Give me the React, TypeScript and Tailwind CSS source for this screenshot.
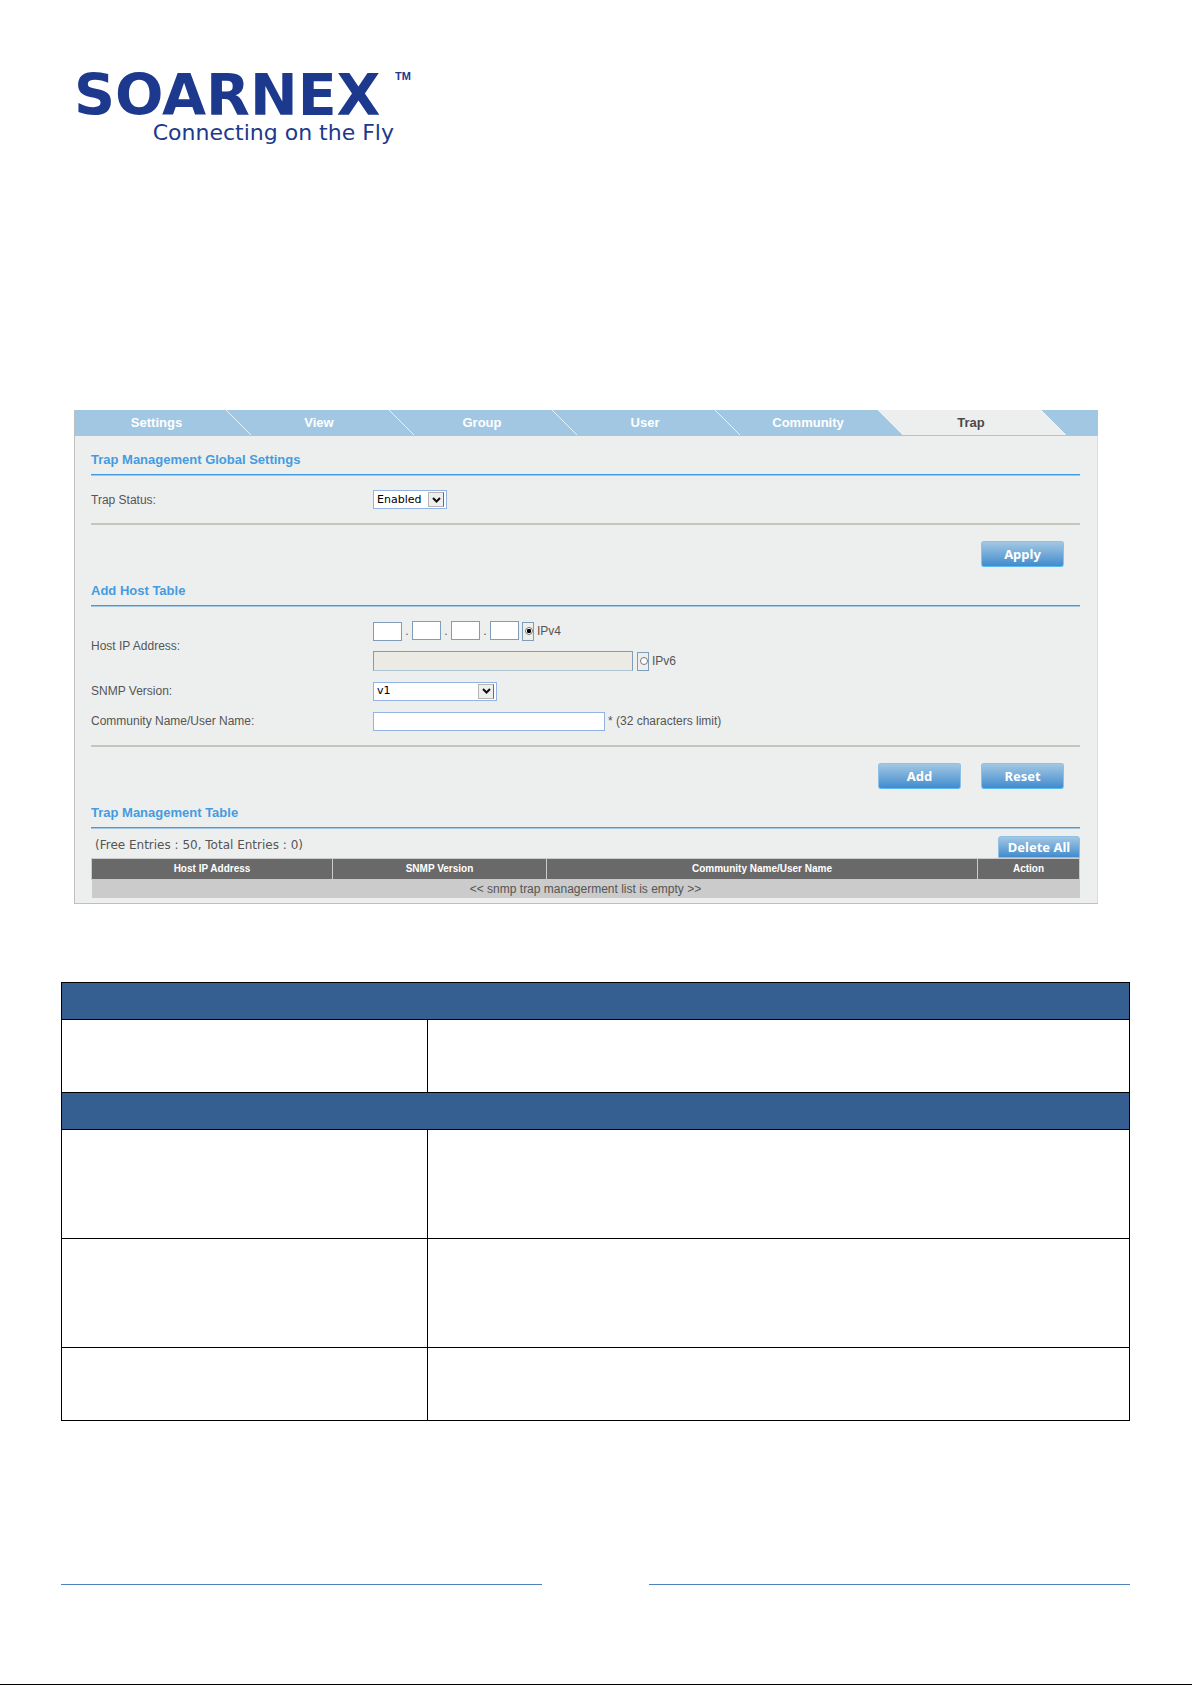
import type { ReactNode } from "react";

const tabs = ["Settings", "View", "Group", "User", "Community", "Trap"];
const octets = ["first", "second", "third", "fourth"];

const columns = [
  { label: "Host IP Address", width: "w-[241px]" },
  { label: "SNMP Version", width: "w-[214px]" },
  { label: "Community Name/User Name", width: "w-auto" },
  { label: "Action", width: "w-[102px]" },
];

function Logo() {
  return (
    <svg
      width="350"
      height="106"
      viewBox="0 0 350 106"
      fill="#1c398e"
      fontFamily="'DejaVu Sans', sans-serif"
      role="img"
      aria-label="SOARNEX Connecting on the Fly"
    >
      <text x="0" y="68" fontSize="57" fontWeight="700">
        SOARNEX
      </text>
      <text
        x="337"
        y="33"
        fontSize="11"
        fontWeight="700"
        fontFamily="'Liberation Sans', sans-serif"
        textAnchor="end"
      >
        TM
      </text>
      <text x="320" y="93" fontSize="22" textAnchor="end">
        Connecting on the Fly
      </text>
    </svg>
  );
}

function Slant({ left, right }: { left: string; right: string }) {
  return (
    <svg width="25" height="25" viewBox="0 0 25 25" className="shrink-0">
      <path d="M0 0H25V25H0Z" fill={right} />
      <path d="M0 0L25 25H0Z" fill={left} />
      <path d="M0 0L25 25" stroke="#e8f1f7" strokeWidth="1" />
    </svg>
  );
}

function TabBar() {
  return (
    <nav className="flex h-[25px] bg-[#a2c7e3]">
      {tabs.map((tab, i) => {
        const active = tab === "Trap";
        const nextActive = tabs[i + 1] === "Trap";
        return (
          <div
            key={tab}
            className={`flex basis-0 ${i === 0 ? "grow-[176]" : "grow-[163]"}`}
          >
            <a
              href="#"
              className={`flex-1 text-center text-[13px] leading-[25px] font-bold ${
                i === 0 ? "pl-3" : "pr-0.5"
              } ${active ? "bg-[#edefee] text-[#4a4a4a]" : "text-white"}`}
            >
              {tab}
            </a>
            <Slant
              left={active ? "#edefee" : "#a2c7e3"}
              right={nextActive ? "#edefee" : "#a2c7e3"}
            />
          </div>
        );
      })}
      <div className="grow-[32] basis-0"></div>
    </nav>
  );
}

function Heading({ children }: { children: ReactNode }) {
  return (
    <div className="border-b border-[#a2c7e3]">
      <h2 className="border-b border-[#459bdf] pb-0.5 text-[13px] leading-6 font-bold text-[#459bdf]">
        {children}
      </h2>
    </div>
  );
}

function Button({ children }: { children: ReactNode }) {
  return (
    <button className="h-[26px] w-[83px] rounded-[3px] border border-[#8fc0e6] border-b-[#5cb8f0] bg-linear-to-b from-[#a2c7e3] to-[#3f8ccd] font-['Noto_Sans',sans-serif] text-[13px] leading-5 font-bold text-white">
      {children}
    </button>
  );
}

function Select({ id, value, width }: { id: string; value: string; width: string }) {
  return (
    <div className={`relative h-[19px] ${width}`}>
      <select
        id={id}
        className="block h-full w-full appearance-none border border-[#92b3e3] bg-white pl-[3px] font-['DejaVu_Sans',sans-serif] text-[11px] leading-4 text-black"
      >
        <option>{value}</option>
      </select>
      <span className="pointer-events-none absolute top-[2px] right-[3px] flex h-[15px] w-4 items-center justify-center border border-[#b5b5b5] border-r-[#6b6b6b] bg-[#efefef]">
        <svg width="9" height="6" viewBox="0 0 9 6" fill="none">
          <path d="M1 1L4.5 4.5L8 1" stroke="#111" strokeWidth="2" />
        </svg>
      </span>
    </div>
  );
}

function Version({ label, checked }: { label: string; checked?: boolean }) {
  return (
    <label className="flex items-center gap-[3px]">
      <span className="flex h-[19px] w-3 items-center justify-end border border-[#7f9db9]">
        <input
          type="radio"
          name="ip-version"
          defaultChecked={checked}
          className="h-2 w-2 appearance-none rounded-full border border-[#777] bg-white checked:bg-[radial-gradient(#000_45%,#fff_60%)]"
        />
      </span>
      {label}
    </label>
  );
}

function TrapPanel() {
  return (
    <section className="mr-8 ml-[13px] border-b border-l border-[#bfbfbf] font-['Liberation_Sans',Arial,sans-serif] text-xs leading-5 text-[#555]">
      <TabBar />
      <div className="border-t border-r border-t-[#bfbfbf] border-r-[#dcdcdc] bg-[#edefee] pt-3 pr-[17px] pb-[5px] pl-4">
        <Heading>Trap Management Global Settings</Heading>
        <div className="flex h-[47px] items-center">
          <label htmlFor="status" className="w-[282px]">
            Trap Status:
          </label>
          <Select id="status" value="Enabled" width="w-[74px]" />
        </div>
        <hr className="border-t-2 border-[#c5c5bd]" />
        <div className="flex justify-end pt-4 pr-4 pb-3">
          <Button>Apply</Button>
        </div>

        <Heading>Add Host Table</Heading>
        <div className="flex pt-[14px]">
          <span className="w-[282px] self-center">Host IP Address:</span>
          <div className="flex flex-col gap-[10px]">
            <div className="flex h-5 items-center">
              {octets.map((octet, i) => (
                <div key={octet} className="flex">
                  {i > 0 && <span className="w-[10px] text-center">.</span>}
                  <input
                    aria-label={`Host IP ${octet} octet`}
                    className="h-[19px] w-[29px] border border-[#7f9db9] bg-white"
                  />
                </div>
              ))}
              <div className="pl-[3px]">
                <Version label="IPv4" checked />
              </div>
            </div>
            <div className="flex h-5 items-center gap-1">
              <input
                aria-label="Host IPv6 address"
                disabled
                className="h-5 w-[260px] border border-[#7f9db9] border-b-[#b0c4d8] bg-[#ebebe4]"
              />
              <Version label="IPv6" />
            </div>
          </div>
        </div>
        <div className="flex flex-col gap-[10px] py-[10px]">
          <div className="flex h-5 items-center">
            <label htmlFor="snmp" className="w-[282px]">
              SNMP Version:
            </label>
            <Select id="snmp" value="v1" width="w-[124px]" />
          </div>
          <div className="flex h-5 items-center">
            <label htmlFor="community" className="w-[282px]">
              Community Name/User Name:
            </label>
            <input
              id="community"
              className="mr-[3px] h-[19px] w-[232px] border border-[#92b3e3] bg-white"
            />
            * (32 characters limit)
          </div>
        </div>
        <hr className="mt-1 border-t-2 border-[#c5c5bd]" />
        <div className="flex justify-end gap-5 pt-4 pr-4 pb-3">
          <Button>Add</Button>
          <Button>Reset</Button>
        </div>

        <Heading>Trap Management Table</Heading>
        <div className="flex items-end justify-between pt-[7px] pl-1">
          <p className="self-start font-['DejaVu_Sans',sans-serif] text-xs leading-[18px]">
            (Free Entries : 50, Total Entries : 0)
          </p>
          <button className="h-[22px] w-[82px] rounded-t-[3px] border border-[#8fc0e6] bg-linear-to-b from-[#a2c7e3] to-[#3f8ccd] font-['Noto_Sans',sans-serif] text-[13px] leading-5 font-bold text-white">
            Delete All
          </button>
        </div>
        <table className="w-full table-fixed border-collapse">
          <thead>
            <tr className="h-[21px] border border-[#cbcbcb] bg-[#696969]">
              {columns.map((column) => (
                <th
                  key={column.label}
                  className={`border-x border-[#cbcbcb] p-0 text-[10px] leading-4 font-bold text-white ${column.width}`}
                >
                  {column.label}
                </th>
              ))}
            </tr>
          </thead>
          <tbody>
            <tr className="bg-[#cbcbcb]">
              <td colSpan={4} className="p-0 text-center leading-[18px]">
                &lt;&lt; snmp trap managerment list is empty &gt;&gt;
              </td>
            </tr>
          </tbody>
        </table>
      </div>
    </section>
  );
}

// Description table: shaded rows span both columns
const rows = [
  { shaded: true, height: "h-[37px]" },
  { shaded: false, height: "h-[73px]" },
  { shaded: true, height: "h-[37px]" },
  { shaded: false, height: "h-[109px]" },
  { shaded: false, height: "h-[109px]" },
  { shaded: false, height: "h-[73px]" },
];

export default function App() {
  return (
    <div className="flex flex-col border-b border-black bg-white">
      <header className="px-[74px] pt-[47px]">
        <Logo />
      </header>
      <main className="pt-[257px] pr-[62px] pl-[61px]">
        <TrapPanel />
        <table className="mt-[78px] w-full table-fixed border-collapse border border-black">
          <colgroup>
            <col className="w-[366px]" />
            <col />
          </colgroup>
          <tbody>
            {rows.map((row, i) => (
              <tr key={i} className={row.height}>
                {row.shaded ? (
                  <td colSpan={2} className="border border-black bg-[#365f91]"></td>
                ) : (
                  <>
                    <td className="border border-black"></td>
                    <td className="border border-black"></td>
                  </>
                )}
              </tr>
            ))}
          </tbody>
        </table>
      </main>
      <footer className="flex gap-[107px] pt-[163px] pr-[62px] pb-[99px] pl-[61px]">
        <div className="flex-1 border-t border-[#4f81bd]"></div>
        <div className="flex-1 border-t border-[#4f81bd]"></div>
      </footer>
    </div>
  );
}
